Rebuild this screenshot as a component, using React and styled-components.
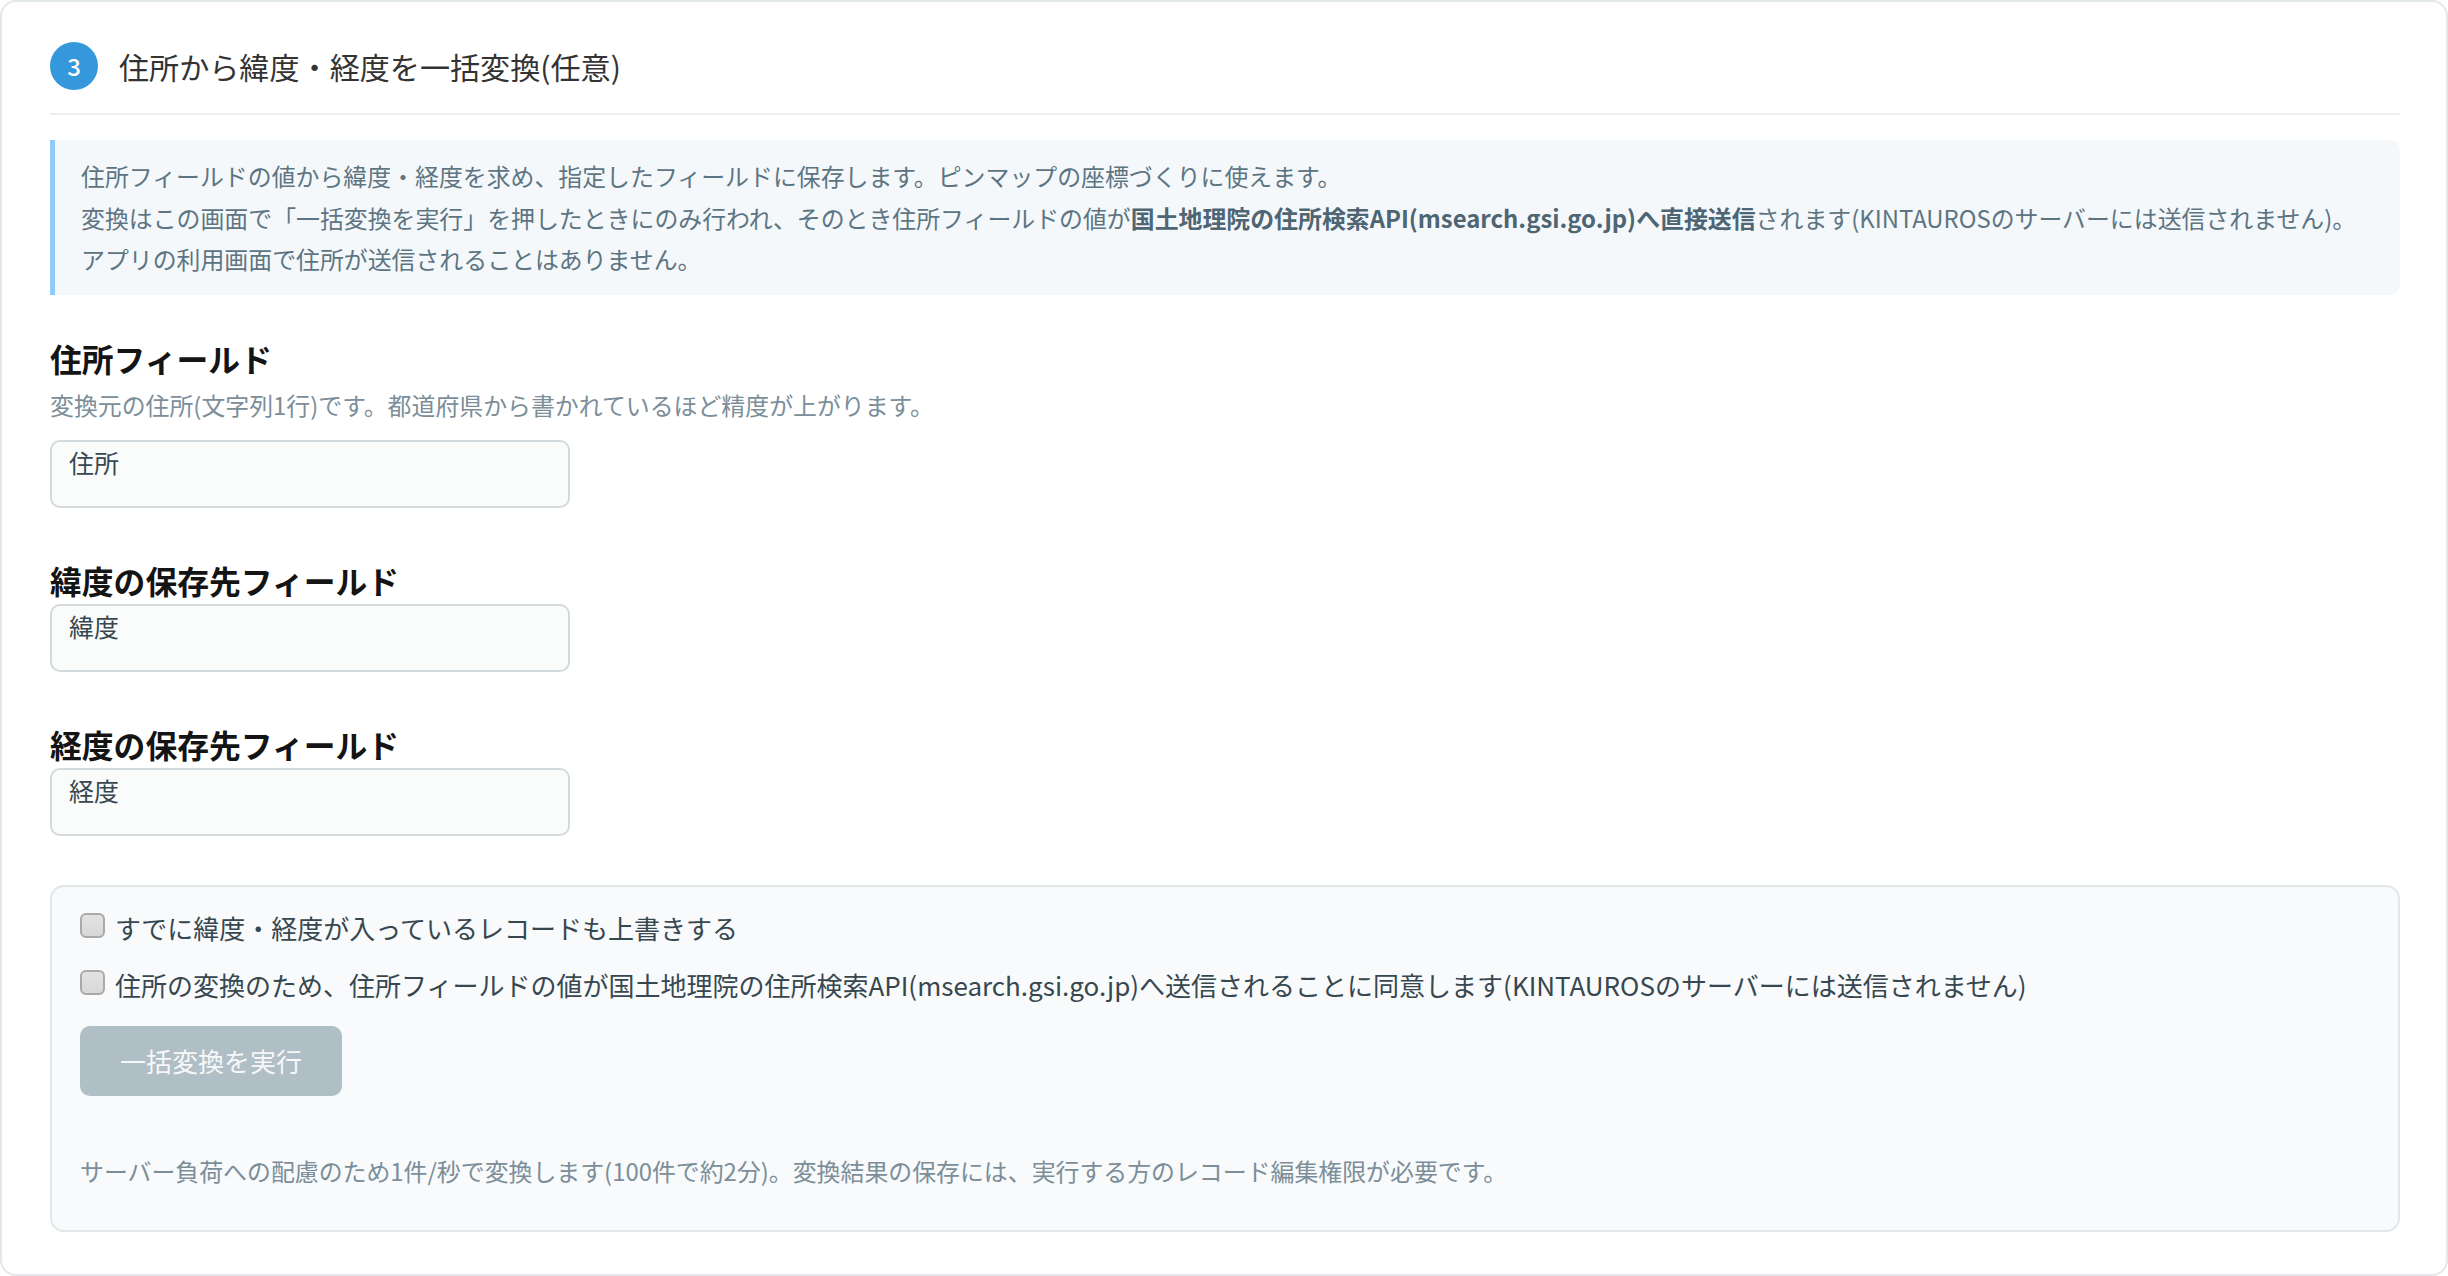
import React from "react";
import styled, { createGlobalStyle } from "styled-components";

const Global = createGlobalStyle`
  html, body { margin: 0; padding: 0; background: #ffffff; }
  body {
    font-family: "Noto Sans CJK JP", "Noto Sans", sans-serif;
    color: #333333;
    -webkit-font-smoothing: antialiased;
  }
  * { box-sizing: border-box; }
`;

const Card = styled.section`
  height: 100vh;
  border: 2px solid #e3e8eb;
  border-radius: 16px;
  padding: 41px 46px 0 48px;
  background: #ffffff;
  display: flex;
  flex-direction: column;
`;

const Header = styled.header`
  display: flex;
  align-items: center;
  gap: 21px;
  height: 72px;
  padding-bottom: 24px;
  border-bottom: 2px solid #eceff1;
`;

const StepBadge = styled.span`
  width: 48px;
  height: 48px;
  border-radius: 50%;
  background: #3498db;
  color: #ffffff;
  display: flex;
  align-items: center;
  justify-content: center;
  font-size: 24px;
  font-weight: 500;
  line-height: 1;
`;

const Title = styled.h2`
  margin: 0;
  font-size: 30.1px;
  font-weight: 400;
  color: #333333;
  line-height: 48px;
`;

const Info = styled.div`
  margin-top: 25px;
  background: #f4f8fb;
  border-left: 5px solid #90caf9;
  border-radius: 0 10px 10px 0;
  padding: 15px 25px 15px 26px;
  color: #5d7582;
  font-size: 23.9px;
  line-height: 41.6px;
`;

const InfoLine = styled.p`
  margin: 0;
  white-space: nowrap;
`;

const Strong = styled.strong`
  font-weight: 700;
  color: #4e6573;
`;

const FieldGroup = styled.div`
  margin-top: ${(p) => p.$gap}px;
  display: flex;
  flex-direction: column;
`;

const FieldLabel = styled.h3`
  margin: 0;
  font-size: 31.8px;
  font-weight: 700;
  color: #141414;
  line-height: 40px;
`;

const FieldHelp = styled.p`
  margin: 9px 0 0;
  font-size: 23.9px;
  line-height: 36px;
  color: #7b8e99;
`;

const FieldSelect = styled.div`
  margin-top: ${(p) => p.$gap}px;
  width: 520px;
  height: 68px;
  border: 2px solid #d3dbdf;
  border-radius: 10px;
  background: #fafbfb;
  padding: 3px 17px;
  font-size: 25px;
  line-height: 34px;
  color: #37474f;
`;

const RunPanel = styled.div`
  margin-top: 49px;
  border: 2px solid #e2e7ea;
  border-radius: 14px;
  background: #f8fafb;
  padding: 23px 29px 41px 28px;
  display: flex;
  flex-direction: column;
  align-items: flex-start;
`;

const CheckRow = styled.label`
  display: flex;
  align-items: center;
  gap: 10px;
  margin-top: ${(p) => p.$gap || 0}px;
  font-size: 26px;
  line-height: 36px;
  color: #37474f;
  white-space: nowrap;
`;

const Check = styled.input.attrs({ type: "checkbox" })`
  appearance: none;
  -webkit-appearance: none;
  margin: 0;
  width: 25px;
  height: 25px;
  border: 2px solid #a9a9a9;
  border-radius: 6px;
  background: linear-gradient(#e2e2e2, #d8d8d8);
  flex: none;
  position: relative;
  top: -2px;
`;

const RunButton = styled.button`
  margin-top: 23px;
  height: 70px;
  padding: 0 40px;
  border: none;
  border-radius: 10px;
  background: #b0bec5;
  color: rgba(255, 255, 255, 0.92);
  font-family: inherit;
  font-size: 26px;
  line-height: 1;
  cursor: not-allowed;
`;

const Note = styled.p`
  margin: 57px 0 0;
  font-size: 23.9px;
  line-height: 36px;
  color: #7b8e99;
`;

export default function App() {
  return (
    <>
      <Global />
      <Card>
        <Header>
          <StepBadge>3</StepBadge>
          <Title>住所から緯度・経度を一括変換(任意)</Title>
        </Header>

        <Info>
          <InfoLine>
            住所フィールドの値から緯度・経度を求め、指定したフィールドに保存します。ピンマップの座標づくりに使えます。
          </InfoLine>
          <InfoLine>
            変換はこの画面で「一括変換を実行」を押したときにのみ行われ、そのとき住所フィールドの値が
            <Strong>国土地理院の住所検索API(msearch.gsi.go.jp)へ直接送信</Strong>
            されます(KINTAUROSのサーバーには送信されません)。
          </InfoLine>
          <InfoLine>アプリの利用画面で住所が送信されることはありません。</InfoLine>
        </Info>

        <FieldGroup $gap={43}>
          <FieldLabel>住所フィールド</FieldLabel>
          <FieldHelp>
            変換元の住所(文字列1行)です。都道府県から書かれているほど精度が上がります。
          </FieldHelp>
          <FieldSelect $gap={17}>住所</FieldSelect>
        </FieldGroup>

        <FieldGroup $gap={52}>
          <FieldLabel>緯度の保存先フィールド</FieldLabel>
          <FieldSelect $gap={4}>緯度</FieldSelect>
        </FieldGroup>

        <FieldGroup $gap={52}>
          <FieldLabel>経度の保存先フィールド</FieldLabel>
          <FieldSelect $gap={4}>経度</FieldSelect>
        </FieldGroup>

        <RunPanel>
          <CheckRow>
            <Check />
            すでに緯度・経度が入っているレコードも上書きする
          </CheckRow>
          <CheckRow $gap={21}>
            <Check />
            住所の変換のため、住所フィールドの値が国土地理院の住所検索API(msearch.gsi.go.jp)へ送信されることに同意します(KINTAUROSのサーバーには送信されません)
          </CheckRow>
          <RunButton disabled>一括変換を実行</RunButton>
          <Note>
            サーバー負荷への配慮のため1件/秒で変換します(100件で約2分)。変換結果の保存には、実行する方のレコード編集権限が必要です。
          </Note>
        </RunPanel>
      </Card>
    </>
  );
}
